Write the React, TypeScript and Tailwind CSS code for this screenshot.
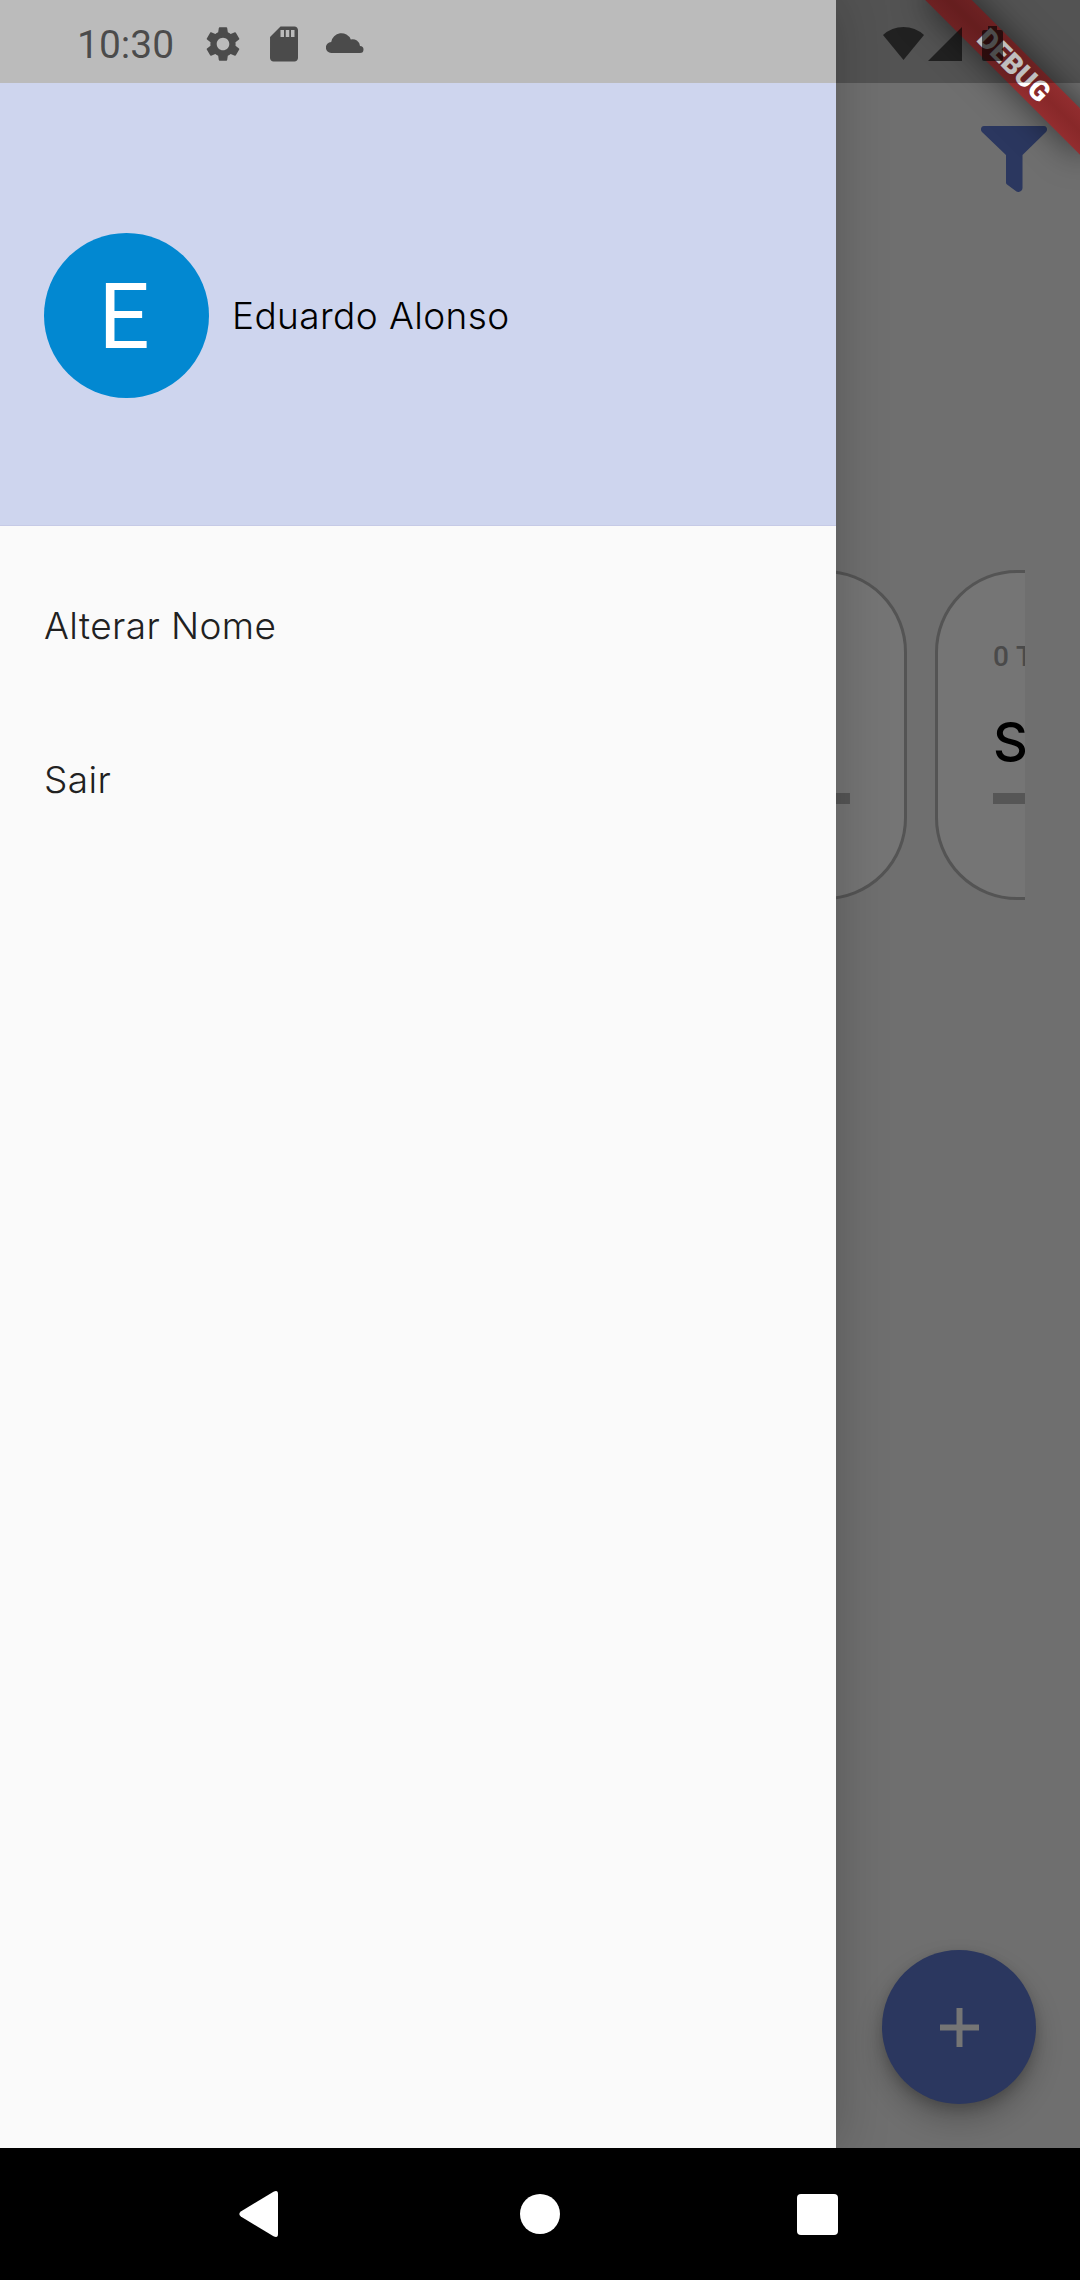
import React from "react";
import { MdSettings, MdSdCard } from "react-icons/md";

function StatusBar() {
  return (
    <div className="absolute inset-x-0 top-0 z-30 h-[83px] bg-black/25 text-black/60">
      <div className="flex h-full items-center pl-[77px] pr-[77px]">
        <span className="mt-[6px] w-[125px] font-['Roboto'] text-[39px] leading-[46px]">10:30</span>
        <MdSettings className="mt-[4px] size-[42px]" />
        <MdSdCard className="ml-[19px] mt-[4px] size-[42px]" />
        <svg className="ml-[21px] mt-[1px] h-[21px] w-[38px]" viewBox="0 0 38 21" fill="currentColor">
          <path d="M5.500 21A5.500 5.500 0 0 1 5.200 10A10.300 10.300 0 0 1 24.800 7.400A7.500 7.500 0 0 1 34 14A3.500 3.500 0 0 1 34 21Z" />
        </svg>
        <div className="ml-auto mt-[3px] flex items-center">
          <svg className="h-[34px] w-[41px]" viewBox="0 0 41 34" fill="currentColor">
            <path d="M0 9A30 30 0 0 1 41 9L20.500 34Z" />
          </svg>
          <svg className="ml-[4px] mt-[1px] h-[34px] w-[34px]" viewBox="0 0 34 34" fill="currentColor">
            <path d="M34 0V34H0Z" />
          </svg>
          <svg className="ml-[20px] h-[35px] w-[21px]" viewBox="0 0 21 35" fill="currentColor">
            <path d="M6 0H15V4H19Q21 4 21 6V33Q21 35 19 35H2Q0 35 0 33V6Q0 4 2 4H6Z" />
          </svg>
        </div>
      </div>
    </div>
  );
}

function DebugBanner() {
  return (
    <div className="absolute left-[904px] top-[49px] z-20 flex h-[33px] w-[220px] rotate-45 items-center justify-center bg-[linear-gradient(to_bottom,#922d2f,#882829_50%,#922d2f)] shadow-[0_0_34px_rgba(0,0,0,0.55)]">
      <span className="font-['Roboto'] text-[28px] font-black leading-none text-white">DEBUG</span>
    </div>
  );
}

function Card({ label, value }: { label: string; value: string }) {
  return (
    <div className="flex h-[330px] w-[440px] shrink-0 flex-col rounded-[82px] border-[3px] border-[#545454] bg-[#757575] pl-[55px] pt-[67px]">
      <span className="h-[34px] whitespace-nowrap font-['Roboto'] text-[28px] font-medium leading-[34px] tracking-[7px] text-[#4a4a4a]">
        {label}
      </span>
      <span className="mt-[32px] h-[72px] font-['Inter'] text-[54px] font-medium leading-[72px] text-black">{value}</span>
      <div className="mt-[15px] h-[11px] w-[325px] bg-[#565656]" />
    </div>
  );
}

function HomeScreen() {
  return (
    <main className="relative flex h-[2148px] flex-col bg-[#6f6f6f]">
      <div className="flex justify-end pr-[33px] pt-[126px]">
        <svg className="h-[66px] w-[66px]" viewBox="0 0 66 66" fill="#2b375f">
          <path d="M3 0H63C66 0 67 4 65 6L41.500 29V62C41.500 65 38 67 35.500 65.500L26 58.500Q25 58 25 56.500V29L1 6C-1 4 0 0 3 0Z" />
        </svg>
      </div>
      <div className="ml-[55px] mt-[378px] flex w-[970px] justify-end overflow-hidden">
        <div className="flex w-[558px] shrink-0 gap-[28px]">
          <Card label="" value="" />
          <Card label="0T" value="S" />
        </div>
      </div>
      <button className="mb-[44px] ml-auto mr-[44px] mt-auto flex size-[154px] items-center justify-center rounded-full bg-[#2b375f] shadow-[0_16px_28px_rgba(0,0,0,0.22),0_5px_12px_rgba(0,0,0,0.18)]">
        <svg className="size-[39px]" viewBox="0 0 39 39" fill="#757575">
          <path d="M16.500 0H22.500V16.500H39V22.500H22.500V39H16.500V22.500H0V16.500H16.500Z" />
        </svg>
      </button>
    </main>
  );
}

function Drawer() {
  return (
    <aside className="absolute left-0 top-0 z-10 h-[2148px] w-[836px] bg-[#fafafa] shadow-[0_0_50px_rgba(0,0,0,0.22)]">
      <div className="h-[83px]" />
      <header className="flex h-[443px] items-center border-b border-[#c6cae6] bg-[#ced5ee] pl-[44px]">
        <div className="mt-[22px] flex size-[165px] items-center justify-center rounded-full bg-[#0288d1]">
          <span className="mr-[5px] mt-[5px] font-['Roboto'] text-[90px] font-[450] leading-none text-white">E</span>
        </div>
        <span className="ml-[23px] mt-[24px] font-['Inter'] text-[37px] font-light leading-[50px] tracking-[0.4px] text-black">
          Eduardo Alonso
        </span>
      </header>
      <nav className="flex flex-col pl-[44px] pt-[23px] font-['Inter'] text-[37px] font-light tracking-[0.4px] text-[#212121]">
        <a className="flex h-[154px] items-center">Alterar Nome</a>
        <a className="flex h-[154px] items-center">Sair</a>
      </nav>
    </aside>
  );
}

function NavigationBar() {
  return (
    <footer className="relative z-40 flex h-[132px] items-center bg-black text-white">
      <svg className="ml-[239px] h-[46px] w-[39px]" viewBox="0 0 39 46" fill="currentColor">
        <path d="M34.500 0.800Q39 -1.500 39 3V43Q39 47.500 34.500 45.200L1.800 25.500Q-1.200 23 1.800 20.500Z" />
      </svg>
      <div className="ml-[242px] size-[40px] rounded-full bg-white" />
      <div className="ml-[237px] size-[41px] rounded-[4px] bg-white" />
    </footer>
  );
}

export default function App() {
  return (
    <div className="relative h-[2280px] w-[1080px] overflow-hidden bg-black">
      <HomeScreen />
      <Drawer />
      <DebugBanner />
      <StatusBar />
      <NavigationBar />
    </div>
  );
}
